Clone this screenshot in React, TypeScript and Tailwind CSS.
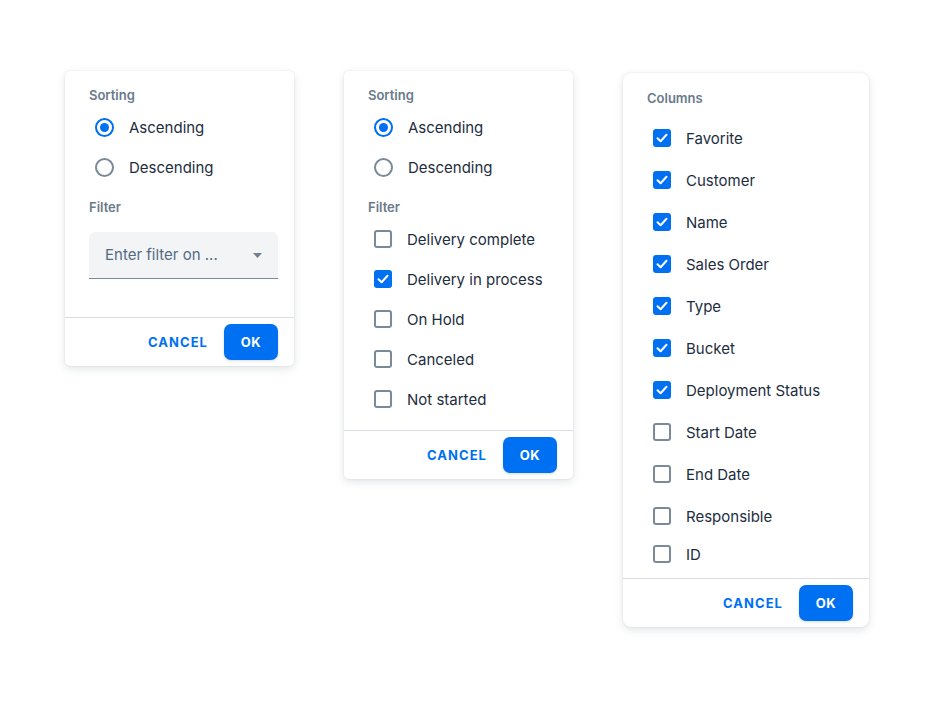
import React from "react";

const font = { fontFamily: "Inter, 'Noto Sans', 'Liberation Sans', sans-serif" };

function Radio({ checked, label }: { checked?: boolean; label: string }) {
  return (
    <div className="flex h-10 items-center pl-[6px]">
      <span
        className={`flex h-[19px] w-[19px] items-center justify-center rounded-full border-2 ${
          checked ? "border-[#0070f2]" : "border-[#7b8a99]"
        }`}
      >
        {checked && <span className="h-[9px] w-[9px] rounded-full bg-[#0070f2]" />}
      </span>
      <span className="ml-[15px] pt-[2px] text-[15px] text-[#1d2d3e]">{label}</span>
    </div>
  );
}

function Checkbox({ checked, label, h = "h-10" }: { checked?: boolean; label: string; h?: string }) {
  return (
    <div className={`flex ${h} items-center pl-[6px]`}>
      {checked ? (
        <span className="flex h-[18px] w-[18px] items-center justify-center rounded-[3px] bg-[#0070f2]">
          <svg width="12" height="10" viewBox="0 0 12 10" fill="none">
            <path d="M1.5 5.2 L4.6 8.2 L10.5 1.8" stroke="white" strokeWidth="2" strokeLinecap="round" strokeLinejoin="round" />
          </svg>
        </span>
      ) : (
        <span className="h-[18px] w-[18px] rounded-[3px] border-2 border-[#7b8a99]" />
      )}
      <span className="ml-[15px] pt-[2px] text-[15px] text-[#1d2d3e]">{label}</span>
    </div>
  );
}

function Label({ children }: { children: React.ReactNode }) {
  return <div className="h-4 text-[13px] font-semibold leading-4 text-[#6a7a8b]">{children}</div>;
}

function Footer() {
  return (
    <div className="flex h-[49px] items-center justify-end gap-4 border-t border-[#d9dee4] pr-4">
      <span className="pt-[2px] text-[13px] font-bold tracking-[0.08em] text-[#0070f2]">CANCEL</span>
      <button className="h-9 w-[54px] rounded-[7px] bg-[#0070f2] pt-[1px] text-[13px] font-bold tracking-[0.05em] text-white shadow-[0_1px_3px_rgba(0,0,0,0.15)]">
        OK
      </button>
    </div>
  );
}

const card = "bg-white rounded-[5px] shadow-[0_0_2px_rgba(34,54,73,0.12),0_3px_8px_rgba(34,54,73,0.13)]";

export default function App() {
  return (
    <div className="flex h-[702px] w-[940px] items-start bg-white" style={font}>
      <div className={`ml-[65px] mt-[71px] w-[229px] ${card}`}>
        <div className="pl-6 pr-4 pt-4">
          <Label>Sorting</Label>
          <div className="mt-1">
            <Radio checked label="Ascending" />
            <Radio label="Descending" />
          </div>
          <div className="mt-3">
            <Label>Filter</Label>
          </div>
          <div className="mb-[38px] mt-[17px] flex h-[47px] items-center justify-between rounded-t-[6px] border-b border-[#7d8a99] bg-[#f2f4f6] pl-4 pr-4">
            <span className="pt-[1px] text-[15px] text-[#556b82]">Enter filter on ...</span>
            <svg width="9" height="5" viewBox="0 0 9 5">
              <path d="M0 0 H9 L4.5 5 Z" fill="#6f7f90" />
            </svg>
          </div>
        </div>
        <Footer />
      </div>

      <div className={`ml-[50px] mt-[71px] w-[229px] ${card}`}>
        <div className="px-6 pb-[11px] pt-4">
          <Label>Sorting</Label>
          <div className="mt-1">
            <Radio checked label="Ascending" />
            <Radio label="Descending" />
          </div>
          <div className="mt-3">
            <Label>Filter</Label>
          </div>
          <div className="mt-1">
            <Checkbox label="Delivery complete" />
            <Checkbox checked label="Delivery in process" />
            <Checkbox label="On Hold" />
            <Checkbox label="Canceled" />
            <Checkbox label="Not started" />
          </div>
        </div>
        <Footer />
      </div>

      <div className={`ml-[50px] mt-[73px] w-[246px] rounded-[8px] ${card}`}>
        <div className="h-[505px] overflow-hidden px-6 pt-[17px]">
          <Label>Columns</Label>
          <div className="mt-[11px]">
            {["Favorite", "Customer", "Name", "Sales Order", "Type", "Bucket", "Deployment Status"].map((l) => (
              <Checkbox key={l} checked label={l} h="h-[42px]" />
            ))}
            {["Start Date", "End Date", "Responsible"].map((l) => (
              <Checkbox key={l} label={l} h="h-[42px]" />
            ))}
            <div className="-mt-[2px]">
              <Checkbox label="ID" h="h-[38px]" />
            </div>
          </div>
        </div>
        <Footer />
      </div>
    </div>
  );
}
